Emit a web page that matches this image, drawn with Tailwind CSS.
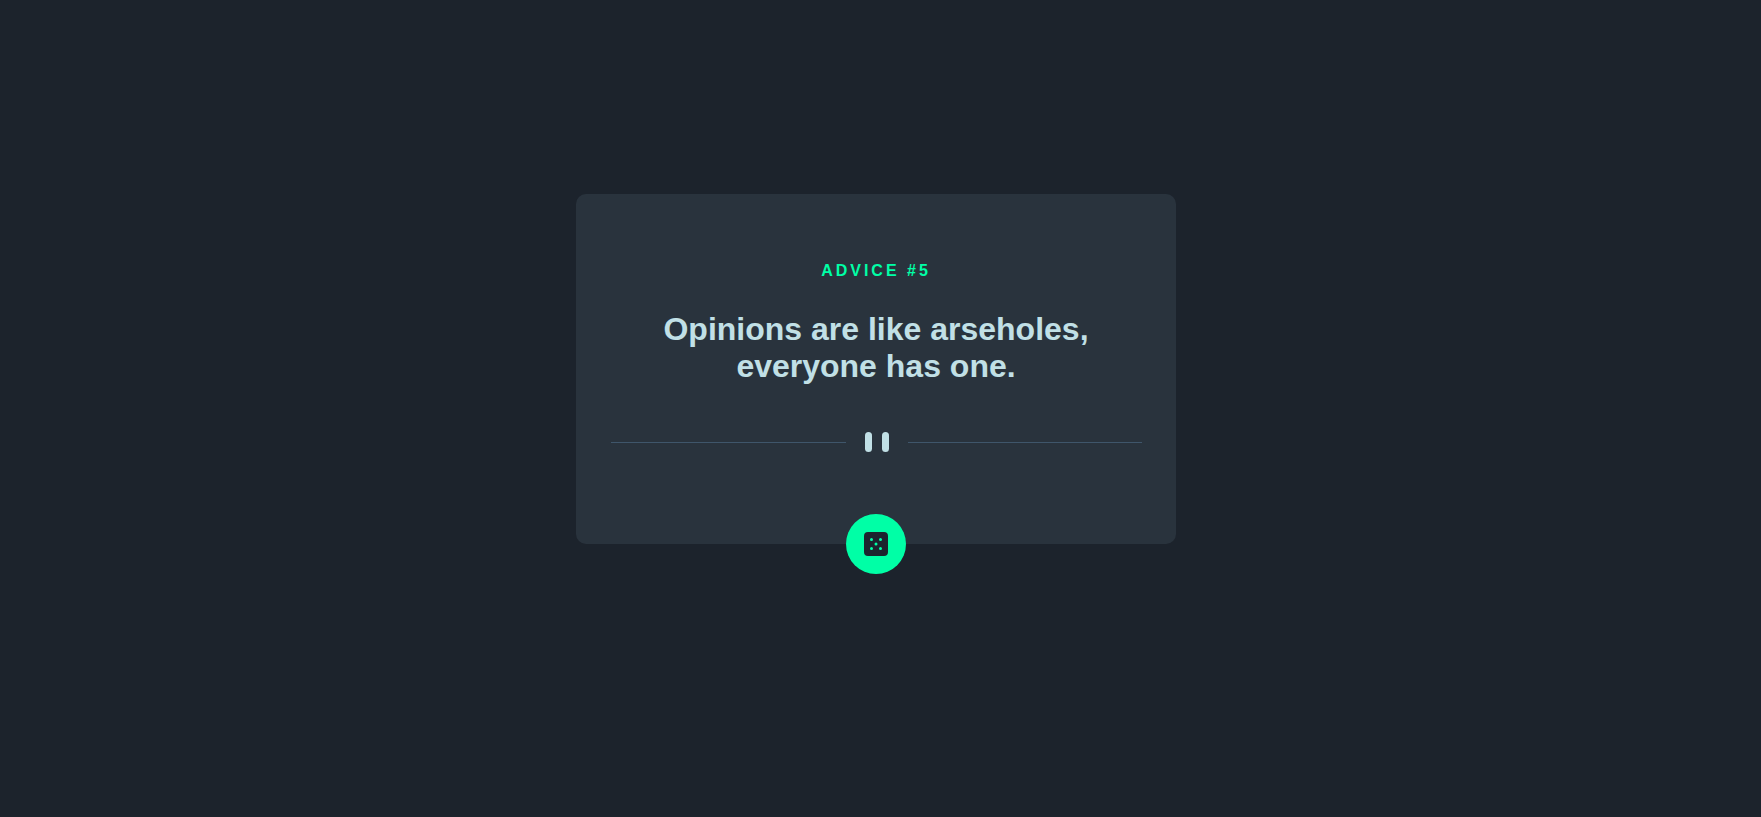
<!DOCTYPE html>
<html lang="en">
<head>
<meta charset="utf-8">
<meta name="viewport" content="width=device-width, initial-scale=1">
<title>Advice Generator</title>
<script src="https://cdn.jsdelivr.net/npm/@tailwindcss/browser@4"></script>
</head>
<body class="min-h-screen bg-[#1c232c] font-['Liberation_Sans',Arial,sans-serif] flex flex-col items-center px-4 pt-[194px] pb-16">
<main class="w-full max-w-[600px] rounded-[10px] bg-[#29333d] px-[34px] pt-[67px] flex flex-col items-center text-center mr-[9px]">
  <h1 class="text-base leading-5 font-bold tracking-[3px] text-[#00ffa6]">ADVICE #5</h1>
  <p class="mt-[30px] max-w-[480px] text-[32px] leading-[37px] font-bold text-[#c1e0e6]">Opinions are like arseholes, everyone has one.</p>
  <div class="mt-[47px] w-full pl-px flex items-center gap-[19px]" aria-hidden="true">
    <span class="h-px flex-1 bg-[#3f566b]"></span>
    <svg class="w-6 h-5 shrink-0" viewBox="0 0 24 20" fill="#c1e0e6">
      <rect width="7" height="20" rx="3.5"/>
      <rect x="17" width="7" height="20" rx="3.5"/>
    </svg>
    <span class="h-px flex-1 bg-[#3f566b]"></span>
  </div>
  <button type="button" aria-label="New advice" class="mt-[62px] -mb-[30px] size-[60px] rounded-full bg-[#00ffa6] flex items-center justify-center cursor-pointer">
    <svg class="size-6" viewBox="0 0 24 24" aria-hidden="true"><path fill="#1c242e" d="M20 0H4a4 4 0 0 0-4 4v16a4 4 0 0 0 4 4h16a4 4 0 0 0 4-4V4a4 4 0 0 0-4-4ZM7.500 18a1.500 1.500 0 1 1 0-3 1.500 1.500 0 0 1 0 3Zm0-9a1.500 1.500 0 1 1 0-3 1.500 1.500 0 0 1 0 3Zm4.500 4.500a1.500 1.500 0 1 1 0-3 1.500 1.500 0 0 1 0 3Zm4.500 4.500a1.500 1.500 0 1 1 0-3 1.500 1.500 0 0 1 0 3Zm0-9a1.500 1.500 0 1 1 0-3 1.500 1.500 0 0 1 0 3Z"/></svg>
  </button>
</main>
</body>
</html>
